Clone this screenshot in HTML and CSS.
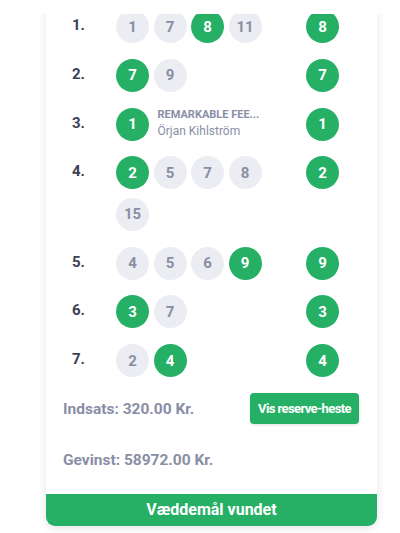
FILE: index.html
```html
<!DOCTYPE html>
<html lang="da">
<head>
<meta charset="utf-8">
<title>Væddemål</title>
<link rel="stylesheet" href="styles.css">
</head>
<body>
<div class="topbar"></div>
<div class="card">
  <div class="rows">
    <div class="row">
      <div class="label">1.</div>
      <div class="picks">
        <span class="ball">1</span><span class="ball">7</span><span class="ball win">8</span><span class="ball">11</span>
      </div>
      <span class="ball win result">8</span>
    </div>
    <div class="row">
      <div class="label">2.</div>
      <div class="picks">
        <span class="ball win">7</span><span class="ball">9</span>
      </div>
      <span class="ball win result">7</span>
    </div>
    <div class="row">
      <div class="label">3.</div>
      <div class="picks">
        <span class="ball win">1</span>
        <div class="horse">
          <div class="horse-name">REMARKABLE FEE...</div>
          <div class="driver">Örjan Kihlström</div>
        </div>
      </div>
      <span class="ball win result">1</span>
    </div>
    <div class="row">
      <div class="label">4.</div>
      <div class="picks">
        <span class="ball win">2</span><span class="ball">5</span><span class="ball">7</span><span class="ball">8</span><span class="ball">15</span>
      </div>
      <span class="ball win result">2</span>
    </div>
    <div class="row">
      <div class="label">5.</div>
      <div class="picks">
        <span class="ball">4</span><span class="ball">5</span><span class="ball">6</span><span class="ball win">9</span>
      </div>
      <span class="ball win result">9</span>
    </div>
    <div class="row">
      <div class="label">6.</div>
      <div class="picks">
        <span class="ball win">3</span><span class="ball">7</span>
      </div>
      <span class="ball win result">3</span>
    </div>
    <div class="row">
      <div class="label">7.</div>
      <div class="picks">
        <span class="ball">2</span><span class="ball win">4</span>
      </div>
      <span class="ball win result">4</span>
    </div>
  </div>
  <div class="stake">
    <span class="amount">Indsats: 320.00 Kr.</span>
    <button class="reserve">Vis reserve-heste</button>
  </div>
  <div class="payout">
    <span class="amount">Gevinst: 58972.00 Kr.</span>
  </div>
  <div class="footer">Væddemål vundet</div>
</div>
</body>
</html>
```
FILE: styles.css
```css
html, body {
  margin: 0;
  padding: 0;
  background: #ffffff;
}

body {
  font-family: Roboto, "Noto Sans", "Liberation Sans", sans-serif;
  width: 400px;
  height: 533px;
  overflow: hidden;
  position: relative;
}

.topbar {
  position: absolute;
  top: 0;
  left: 0;
  right: 0;
  height: 14px;
  background: #ffffff;
  z-index: 5;
}

.card {
  margin-left: 46px;
  width: 331px;
  background: #ffffff;
  border-radius: 0 0 9px 9px;
  box-shadow: 0 2px 10px rgba(40, 45, 70, 0.12);
  overflow: hidden;
}

.rows {
  padding-top: 10px;
}

.row {
  display: flex;
  align-items: flex-start;
  padding: 0 38px 0 26px;
  margin-bottom: 15.8px;
}

.label {
  width: 44px;
  flex: none;
  font-size: 15px;
  font-weight: 700;
  color: #3c4053;
  line-height: 30px;
}

.picks {
  width: 152px;
  display: flex;
  flex-wrap: wrap;
  align-items: center;
  gap: 8.5px 4.5px;
}

.ball {
  width: 33px;
  height: 33px;
  border-radius: 50%;
  background: #ecedf3;
  color: #8a8ea5;
  font-size: 15px;
  font-weight: 700;
  display: flex;
  align-items: center;
  justify-content: center;
  flex: none;
}

.ball.win {
  background: #26b065;
  color: #ffffff;
}

.result {
  margin-left: auto;
}

.horse {
  margin-left: 4px;
  display: flex;
  flex-direction: column;
  gap: 3px;
  margin-top: -3px;
}

.horse-name {
  font-size: 11px;
  font-weight: 700;
  color: #8a8ea5;
  white-space: nowrap;
}

.driver {
  font-size: 12px;
  color: #8a8ea5;
}

.stake {
  display: flex;
  align-items: center;
  justify-content: space-between;
  padding: 0 18px 0 17px;
  margin-top: 9px;
}

.amount {
  font-size: 15.5px;
  font-weight: 700;
  color: #8a8ea5;
}

.reserve {
  border: none;
  background: #26b065;
  color: #ffffff;
  border-radius: 4px;
  height: 31px;
  width: 109px;
  padding: 0;
  font-family: Roboto, "Noto Sans", "Liberation Sans", sans-serif;
  font-size: 13px;
  font-weight: 700;
  letter-spacing: -0.6px;
  box-shadow: 0 1px 3px rgba(0, 0, 0, 0.12);
}

.payout {
  padding: 26px 17px 24px;
  line-height: 19px;
}

.footer {
  height: 32px;
  background: #26b065;
  color: #ffffff;
  font-size: 16px;
  font-weight: 700;
  text-align: center;
  line-height: 32px;
}
```
